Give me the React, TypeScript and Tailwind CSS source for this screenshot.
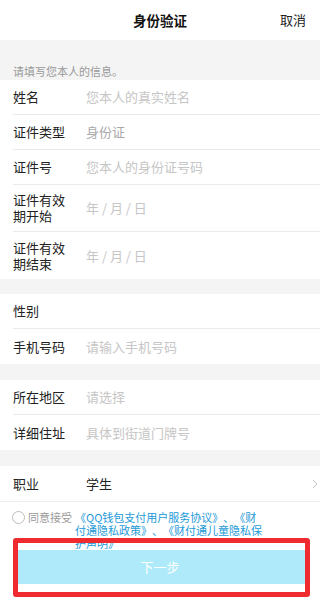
import type { ReactNode } from "react";

const font = { fontFamily: '"Noto Sans CJK SC", "Noto Sans", sans-serif' };

interface RowProps {
  label: ReactNode;
  value?: string;
  tone?: "placeholder" | "muted" | "dark";
  tall?: boolean;
  last?: boolean;
  chevron?: boolean;
}

function Row({ label, value, tone = "placeholder", tall, last, chevron }: RowProps) {
  const valueColor =
    tone === "dark" ? "text-[#222]" : tone === "muted" ? "text-[#a9a9a9]" : "text-[#c6c6c6]";
  return (
    <div className="pl-[13px] bg-white">
      <div
        className={`flex items-center ${tall ? "h-[47px]" : "h-[35px]"} ${
          last ? "" : "border-b border-[#ebebeb]"
        }`}
      >
        <div className="w-[73px] shrink-0 pr-[14px] text-[13px] leading-[16px] text-[#222]">{label}</div>
        <div className={`flex-1 text-[13px] leading-[16px] ${valueColor}`}>{value}</div>
        {chevron && (
          <svg width="6" height="10" viewBox="0 0 6 10" className="mr-[2px]">
            <path d="M1 1l4 4-4 4" fill="none" stroke="#c4c4c4" strokeWidth="1" />
          </svg>
        )}
      </div>
    </div>
  );
}

export default function App() {
  return (
    <div
      className="w-[320px] h-[600px] overflow-hidden bg-[#f4f4f4] [text-spacing-trim:space-all]"
      style={font}
    >
      <div className="h-[40px] bg-white grid grid-cols-[1fr_auto_1fr] items-center">
        <div />
        <div className="text-[13.5px] font-bold text-[#111]">身份验证</div>
        <div className="text-right pr-[14px] text-[13px] text-[#222]">取消</div>
      </div>

      <div className="h-[40px] flex items-end pl-[13px] pb-[1px]">
        <span className="text-[11px] leading-[16px] text-[#999]">请填写您本人的信息。</span>
      </div>

      <Row label="姓名" value="您本人的真实姓名" />
      <Row label="证件类型" value="身份证" tone="muted" />
      <Row label="证件号" value="您本人的身份证号码" />
      <Row label="证件有效期开始" value="年 / 月 / 日" tall />
      <Row label="证件有效期结束" value="年 / 月 / 日" tall last />

      <div className="h-[15px]" />
      <Row label="性别" />
      <Row label="手机号码" value="请输入手机号码" last />

      <div className="h-[16px]" />
      <Row label="所在地区" value="请选择" />
      <Row label="详细住址" value="具体到街道门牌号" last />

      <div className="h-[16px]" />
      <div className="border-b border-[#ececec]">
        <Row label="职业" value="学生" tone="dark" last chevron />
      </div>

      <div className="relative bg-white h-[98px]">
        <div className="flex pt-[9px] pl-[12px] text-[11px] leading-[13px]">
          <span className="w-[13px] h-[13px] rounded-full border border-[#bdbdbd] shrink-0" />
          <span className="ml-[3px] text-[#9a9a9a] shrink-0">同意接受</span>
          <span className="ml-[3px] w-[188px] text-[#1e9ad8]">
            《QQ钱包支付用户服务协议》、《财付通隐私政策》、《财付通儿童隐私保护声明》
          </span>
        </div>
        <button className="block mx-[15px] w-[290px] h-[34px] bg-[#aeeaf9] text-white text-[13px]">
          下一步
        </button>
        <div className="pointer-events-none absolute left-[13px] top-[36px] w-[297px] h-[59px] rounded-[3px] border-[5px] border-[#ef2b2f]" />
      </div>
    </div>
  );
}
